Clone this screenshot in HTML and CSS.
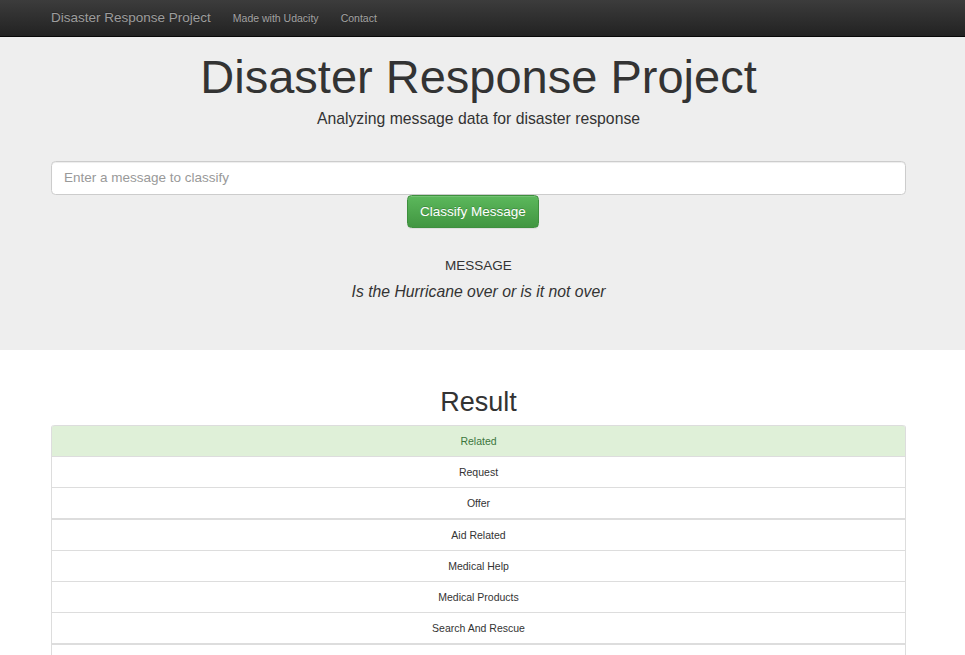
FILE: index.html
```html
<!DOCTYPE html>
<html lang="en">
<head>
<meta charset="utf-8">
<title>Disasters</title>
<link rel="stylesheet" href="styles.css">
</head>
<body>
<nav class="navbar">
  <div class="container navbar-inner">
    <a class="brand" href="#">Disaster Response Project</a>
    <ul class="nav">
      <li><a href="#">Made with Udacity</a></li>
      <li><a href="#">Contact</a></li>
    </ul>
  </div>
</nav>

<div class="jumbotron">
  <div class="container">
    <h1 class="title">Disaster Response Project</h1>
    <p class="lead">Analyzing message data for disaster response</p>
    <form class="classify-form">
      <input class="query" type="text" placeholder="Enter a message to classify">
      <div class="btn-row">
        <button type="button" class="btn-success">Classify Message</button>
      </div>
    </form>
    <div class="message-block">
      <div class="message-label">MESSAGE</div>
      <div class="message-text">Is the Hurricane over or is it not over</div>
    </div>
  </div>
</div>

<div class="container results">
  <h1 class="result-title">Result</h1>
  <ul class="list-group">
    <li class="list-item success">Related</li>
    <li class="list-item">Request</li>
    <li class="list-item">Offer</li>
    <li class="list-item thick">Aid Related</li>
    <li class="list-item">Medical Help</li>
    <li class="list-item">Medical Products</li>
    <li class="list-item">Search And Rescue</li>
    <li class="list-item thick">Security</li>
  </ul>
</div>
</body>
</html>
```

FILE: styles.css
```css
* { box-sizing: border-box; }
html, body { margin: 0; padding: 0; }
body {
  font-family: "Liberation Sans", Arial, Helvetica, sans-serif;
  color: #333;
  background: #fff;
  font-size: 10.5px;
  overflow: hidden;
}
.container {
  width: 855px;
  margin-left: 51px;
}

/* navbar */
.navbar {
  height: 37px;
  background: linear-gradient(to bottom, #3c3c3c 0%, #222 100%);
  border-bottom: 1px solid #080808;
}
.navbar-inner {
  display: flex;
  align-items: center;
  height: 36px;
}
.brand {
  color: #9d9d9d;
  font-size: 13.5px;
  text-decoration: none;
  text-shadow: 0 -1px 0 rgba(0,0,0,.25);
  padding-right: 11px;
  line-height: 36px;
}
.nav {
  display: flex;
  list-style: none;
  margin: 0;
  padding: 0;
}
.nav a {
  display: block;
  color: #a3a3a3;
  font-size: 10.5px;
  text-decoration: none;
  text-shadow: 0 -1px 0 rgba(0,0,0,.25);
  padding: 0 11px;
  line-height: 35px;
}

/* jumbotron */
.jumbotron {
  background: #eee;
  padding-top: 14px;
  height: 313px;
}
.title {
  margin: 0;
  font-size: 47px;
  font-weight: 500;
  line-height: 52px;
  text-align: center;
  color: #333;
}
.lead {
  margin: 5px 0 0;
  font-size: 15.75px;
  line-height: 22px;
  text-align: center;
}
.classify-form {
  margin-top: 31px;
}
.query {
  display: block;
  width: 100%;
  height: 34px;
  padding: 0 12px 2px;
  font-family: inherit;
  font-size: 13.5px;
  color: #555;
  background: #fff;
  border: 1px solid #ccc;
  border-radius: 4.5px;
  box-shadow: inset 0 1px 1px rgba(0,0,0,.075);
  outline: none;
}
.query::placeholder { color: #999; }
.btn-row {
  display: flex;
  justify-content: center;
  padding-right: 11px;
}
.btn-success {
  width: 132px;
  height: 33px;
  font-family: inherit;
  font-size: 13.5px;
  color: #fff;
  text-shadow: 0 -1px 0 rgba(0,0,0,.2);
  background: linear-gradient(to bottom, #5cb85c 0%, #419641 100%);
  border: 1px solid #3e8f3e;
  border-radius: 4.5px;
  box-shadow: inset 0 1px 0 rgba(255,255,255,.15), 0 1px 1px rgba(0,0,0,.075);
  padding: 0;
}
.message-block {
  margin-top: 28px;
  text-align: center;
}
.message-label {
  font-size: 13.5px;
  line-height: 20px;
}
.message-text {
  font-size: 15.75px;
  font-style: italic;
  line-height: 22px;
  margin-top: 5px;
}

/* results */
.result-title {
  margin: 37px 0 0;
  font-size: 27px;
  font-weight: 500;
  line-height: 30px;
  text-align: center;
}
.list-group {
  list-style: none;
  margin: 8px 0 0;
  padding: 0;
  border: 1px solid #ddd;
  border-top: none;
  border-radius: 3px;
}
.list-item {
  height: 31px;
  line-height: 30px;
  border-top: 1px solid #ddd;
  text-align: center;
  font-size: 10.5px;
  color: #333;
  background: #fff;
}
.list-item.thick {
  height: 32px;
  border-top-width: 2px;
}
.list-item.success {
  background: #dff0d8;
  color: #3c763d;
  border-radius: 3px 3px 0 0;
}
```
